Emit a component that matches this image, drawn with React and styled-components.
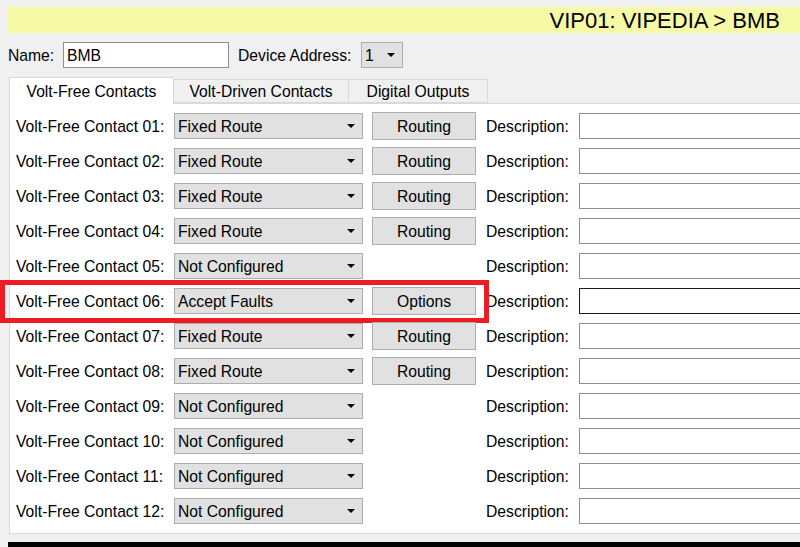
import React from "react";
import styled, { createGlobalStyle } from "styled-components";

const GlobalStyle = createGlobalStyle`
  html, body {
    margin: 0;
    padding: 0;
    background: #f0f0f0;
    overflow: hidden;
  }
  body {
    font-family: "Liberation Sans", Arial, sans-serif;
    font-size: 15.7px;
    color: #000;
  }
`;

const Page = styled.div`
  width: 830px;
  padding: 7px 0 0 8px;
  box-sizing: border-box;
  display: flex;
  flex-direction: column;
  & > * {
    flex: none;
  }
`;

const Banner = styled.div`
  height: 26px;
  width: 792px;
  background: #f6f9a6;
  font-size: 22px;
  line-height: 28px;
  text-align: right;
  padding-right: 20px;
  box-sizing: border-box;
`;

const TopRow = styled.div`
  display: flex;
  align-items: center;
  height: 26px;
  margin-top: 9px;
`;

const Label = styled.span`
  width: ${(p) => p.$w}px;
  flex: none;
  padding-top: 2px;
  white-space: nowrap;
`;

const TextBox = styled.div`
  width: ${(p) => p.$w}px;
  height: 26px;
  flex: none;
  box-sizing: border-box;
  background: #fff;
  border: 1px solid ${(p) => (p.$focused ? "#1a1a1a" : "#8e8e8e")};
  padding-left: 3px;
  line-height: 25px;
  margin-right: ${(p) => p.$mr || 0}px;
`;

const Combo = styled.div`
  position: relative;
  width: ${(p) => p.$w}px;
  height: 26px;
  flex: none;
  box-sizing: border-box;
  background: #e1e1e1;
  border: 1px solid #adadad;
  padding-left: 3px;
  line-height: 25px;
  white-space: nowrap;
  &::after {
    content: "";
    position: absolute;
    right: 7px;
    top: 10px;
    border-left: 4px solid transparent;
    border-right: 4px solid transparent;
    border-top: 4px solid #000;
  }
`;

const TabStrip = styled.div`
  display: flex;
  align-items: flex-end;
  margin-top: 9px;
  margin-left: 1px;
  height: 26px;
  position: relative;
  z-index: 1;
`;

const Tab = styled.div`
  width: ${(p) => p.$w}px;
  height: ${(p) => (p.$active ? 27 : 24)}px;
  box-sizing: border-box;
  background: ${(p) => (p.$active ? "#fff" : "#f0f0f0")};
  border: 1px solid #d9d9d9;
  border-bottom: ${(p) => (p.$active ? "none" : "1px solid #d9d9d9")};
  margin-left: ${(p) => (p.$active ? 0 : -1)}px;
  margin-bottom: ${(p) => (p.$active ? -1 : 0)}px;
  text-align: center;
  line-height: ${(p) => (p.$active ? 27 : 23)}px;
  white-space: nowrap;
  &:first-child {
    margin-left: 0;
  }
`;

const Panel = styled.div`
  margin-left: 1px;
  width: 830px;
  height: 431px;
  box-sizing: border-box;
  background: #fff;
  border: 1px solid #d9d9d9;
  padding: 4px 0 0 6px;
  display: flex;
  flex-direction: column;
  position: relative;
`;

const Row = styled.div`
  height: 35px;
  flex: none;
  display: flex;
  align-items: center;
  position: relative;
`;

const Button = styled.div`
  width: 104px;
  height: 28px;
  flex: none;
  box-sizing: border-box;
  margin-left: 9px;
  background: #e1e1e1;
  border: 1px solid #adadad;
  text-align: center;
  line-height: 27px;
`;

const ButtonSlot = styled.div`
  width: 104px;
  flex: none;
  margin-left: 9px;
`;

const Description = styled.span`
  width: 93px;
  margin-left: 10px;
  padding-top: 2px;
  flex: none;
`;

const Highlight = styled.div`
  position: absolute;
  left: -16px;
  top: -3px;
  width: 489px;
  height: 43px;
  box-sizing: border-box;
  border: 5px solid #ed1c24;
  pointer-events: none;
`;

const BottomBar = styled.div`
  margin-top: 8px;
  width: 792px;
  height: 10px;
  background: #000;
`;

const contacts = [
  { mode: "Fixed Route", action: "Routing" },
  { mode: "Fixed Route", action: "Routing" },
  { mode: "Fixed Route", action: "Routing" },
  { mode: "Fixed Route", action: "Routing" },
  { mode: "Not Configured" },
  { mode: "Accept Faults", action: "Options", highlight: true, focused: true },
  { mode: "Fixed Route", action: "Routing" },
  { mode: "Fixed Route", action: "Routing" },
  { mode: "Not Configured" },
  { mode: "Not Configured" },
  { mode: "Not Configured" },
  { mode: "Not Configured" },
];

export default function App() {
  return (
    <>
      <GlobalStyle />
      <Page>
        <Banner>VIP01: VIPEDIA &gt; BMB</Banner>
        <TopRow>
          <Label $w={55}>Name:</Label>
          <TextBox $w={166} $mr={9}>BMB</TextBox>
          <Label $w={123}>Device Address:</Label>
          <Combo $w={42}>1</Combo>
        </TopRow>
        <TabStrip>
          <Tab $active $w={165}>Volt-Free Contacts</Tab>
          <Tab $w={176}>Volt-Driven Contacts</Tab>
          <Tab $w={140}>Digital Outputs</Tab>
        </TabStrip>
        <Panel>
          {contacts.map((c, i) => (
            <Row key={i}>
              {c.highlight && <Highlight />}
              <Label $w={158}>
                Volt-Free Contact {String(i + 1).padStart(2, "0")}:
              </Label>
              <Combo $w={189}>{c.mode}</Combo>
              {c.action ? <Button>{c.action}</Button> : <ButtonSlot />}
              <Description>Description:</Description>
              <TextBox $w={260} $focused={c.focused} />
            </Row>
          ))}
        </Panel>
        <BottomBar />
      </Page>
    </>
  );
}
